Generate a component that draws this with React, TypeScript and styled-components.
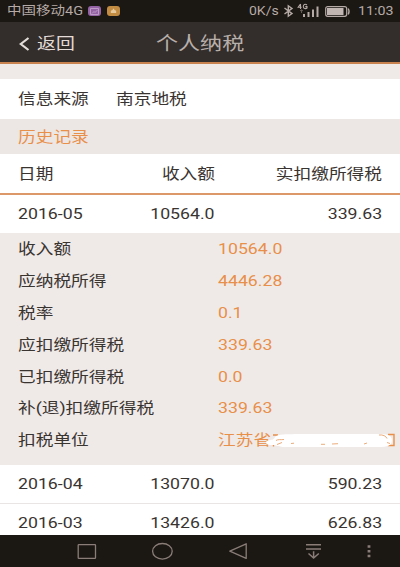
import React from 'react';
import styled, { createGlobalStyle } from 'styled-components';

const GlobalStyle = createGlobalStyle`
  * { box-sizing: border-box; }
  body { margin: 0; background: #1b1713; }
`;

const Screen = styled.main`
  width: 400px;
  height: 567px;
  display: flex;
  flex-direction: column;
  overflow: hidden;
  background: #fff;
  color: #3a3431;
  font-family: Roboto, "Noto Sans CJK SC", sans-serif;
  font-size: 15px;
  line-height: 20px;
`;

/* The typeface is set wide, so glyphs are expanded along the x axis. */
const Wide = styled.span<{ $from?: 'left' | 'right'; $scale?: number }>`
  display: inline-block;
  white-space: nowrap;
  transform: scaleX(${p => p.$scale ?? 1.18});
  transform-origin: ${p => p.$from ?? 'left'} center;
`;

const StatusBar = styled.header`
  flex: none;
  height: 22px;
  padding: 0 7px;
  display: flex;
  align-items: center;
  justify-content: space-between;
  background: #1b1713;
  color: #b5aaa5;
  font-size: 12.5px;
`;

const Carrier = styled.div`
  width: 81px;
`;

const StatusGroup = styled.div`
  display: flex;
  align-items: center;
`;

const AppIcon = styled.span<{ $color: string }>`
  width: 13px;
  height: 10px;
  margin-right: 6px;
  border-radius: 3px;
  background: ${p => p.$color};
  display: flex;
  align-items: center;
  justify-content: center;
`;

const Speed = styled.div`
  width: 34px;
`;

const Clock = styled.div`
  width: 35px;
`;

const TitleBar = styled.nav`
  flex: none;
  height: 42px;
  padding: 3px 0 0 19px;
  display: flex;
  align-items: center;
  background: #332e2b;
  border-bottom: 2px solid #c88250;
`;

const Back = styled.div`
  width: 137px;
  display: flex;
  align-items: center;
  gap: 7px;
  color: #e3dcd8;
  font-size: 16px;
`;

const Title = styled.h1`
  margin: 0;
  color: #b9afaa;
  font-size: 18.7px;
  font-weight: 400;
`;

const Content = styled.div`
  flex: 1;
  min-height: 0;
  overflow: hidden;
`;

const Spacer = styled.div`
  height: 15px;
  background: #efeae8;
`;

const Source = styled.section`
  height: 40px;
  padding: 0 18px;
  display: flex;
  align-items: center;
`;

const SourceLabel = styled.div`
  width: 98px;
`;

const SectionTitle = styled.h2`
  height: 35px;
  margin: 0;
  padding: 0 18px;
  display: flex;
  align-items: center;
  background: #ece6e4;
  color: #e88f49;
  font-size: 15px;
  font-weight: 400;
`;

const Row = styled.div<{ $kind?: 'head' | 'lined' }>`
  height: ${p => (p.$kind === 'head' ? 41 : p.$kind === 'lined' ? 39 : 38)}px;
  padding: 0 18px;
  display: grid;
  grid-template-columns: 108px 89px 1fr;
  align-items: center;
  border-bottom: ${p =>
    p.$kind === 'head' ? '2px solid #dc9868' : p.$kind === 'lined' ? '1px solid #e9e5e4' : 'none'};
`;

const Amount = styled.div`
  text-align: right;
`;

const Details = styled.section`
  height: 232px;
  background: #efeae8;
`;

const Detail = styled.div`
  height: 31.9px;
  padding-left: 18px;
  display: grid;
  grid-template-columns: 200px 1fr;
  align-items: center;
`;

const Value = styled.div`
  display: flex;
  align-items: center;
  color: #e88f49;
`;

const Company = styled.div`
  width: 47px;
`;

const Cover = styled.svg`
  flex: none;
  z-index: 1;
`;

const NavBar = styled.footer`
  flex: none;
  height: 32px;
  background: #1b1713;
`;

const records = [
  ['2016-04', '13070.0', '590.23'],
  ['2016-03', '13426.0', '626.83'],
];

const details = [
  ['收入额', '10564.0'],
  ['应纳税所得', '4446.28'],
  ['税率', '0.1'],
  ['应扣缴所得税', '339.63'],
  ['已扣缴所得税', '0.0'],
  ['补(退)扣缴所得税', '339.63'],
];

function Record({ cells, kind }: { cells: string[]; kind?: 'head' | 'lined' }) {
  return (
    <Row $kind={kind}>
      <div><Wide>{cells[0]}</Wide></div>
      <Amount><Wide $from="right">{cells[1]}</Wide></Amount>
      <Amount><Wide $from="right">{cells[2]}</Wide></Amount>
    </Row>
  );
}

function StatusIcons() {
  return (
    <svg width="75" height="20" viewBox="0 0 75 20" fill="none">
      <path d="M1.5 7 L9 12.6 L5.3 15.2 V4.8 L9 7.4 L1.5 13" stroke="#b5aaa5" strokeWidth="1.4" />
      <path d="M17.5 3 L15.2 6.2 H18.7 M17.5 3 V8 M24 4 C22 2.4 20.3 3.5 20.3 5.5 C20.3 8 23 8 24 7 V5.6 H22.3" stroke="#b5aaa5" strokeWidth="1.1" />
      <path d="M17 10 L18.5 8.8 L20 10 M18.5 9 V12" stroke="#6f6560" strokeWidth="0.9" />
      <path d="M21 13V16 M25.5 11V16 M30 8.5V16 M34.5 5.5V16" stroke="#b5aaa5" strokeWidth="2" />
      <rect x="42.7" y="5.7" width="21" height="9.6" rx="2" stroke="#b5aaa5" strokeWidth="1.2" />
      <rect x="44" y="7" width="16.5" height="7" fill="#c1b6b1" />
      <path d="M65.2 7.5 Q67 10.5 65.2 13.5" stroke="#b5aaa5" strokeWidth="1.3" />
    </svg>
  );
}

function NavIcons() {
  return (
    <svg width="400" height="32" viewBox="0 0 400 32" fill="none" stroke="#8a7d78" strokeWidth="1.3">
      <rect x="78.2" y="9.7" width="17.3" height="13.6" rx="0.6" />
      <ellipse cx="162.4" cy="16.3" rx="9.8" ry="7.8" />
      <path d="M246.2 8.8 V23.4 L229.8 16.2 Z" strokeLinejoin="round" />
      <path d="M306 9.7 H321 M306 14 H321 M313.6 16.3 V23 M308.5 18.5 L313.6 23 L318.8 18.5" strokeWidth="1.5" />
      <path d="M369 10.2 V12.7 M369 15 V17.5 M369 19.8 V22.3" strokeWidth="2.8" />
    </svg>
  );
}

function CoveredName() {
  return (
    <Cover width="131" height="20" viewBox="0 0 131 20" fill="none">
      <path d="M8 5 H13 M8.5 9 V16.5 M123 4.5 H129 V15.5 H123 M122 8 V13" stroke="#e88f49" strokeWidth="1.4" />
      <path d="M1 12 C3 9 9 11 10 7 C13 3.5 22 4.5 30 4 H112 C121 3.5 127 5 127 10 C127 16 122 17 114 17 H20 C14 17 12 15 7 15 C2 15 1 14 1 12 Z" fill="#fff" />
      <path d="M11 10.5 C13 9 16 10 19 9.5 M12 14.5 L17 12.5 M26 13.5 L29 13.2 M56 14.3 H60 M67 14 L73 13.7 M99 14 L102 13 M114 5 C118 4.5 121 6 122 8.5 M122 12.5 L125 13.5" stroke="#e9a16b" strokeWidth="0.9" />
    </Cover>
  );
}

export default function App() {
  return (
    <>
      <GlobalStyle />
      <Screen>
        <StatusBar>
          <StatusGroup>
            <Carrier><Wide $scale={1.16}>中国移动4G</Wide></Carrier>
            <AppIcon $color="#9363a3">
              <svg width="9" height="7" viewBox="0 0 9 7" fill="none" stroke="#c8a9cf" strokeWidth="0.8">
                <path d="M.5 .5 H8.5 V6.5 H.5 Z M2 5.5 L4 3.5 L5 4.5 L7.5 2" />
              </svg>
            </AppIcon>
            <AppIcon $color="#c38c43">
              <svg width="7" height="6" viewBox="0 0 7 6" fill="#e6c99d">
                <path d="M1 5 Q0 2.5 2.5 2 Q3.5 -1 4.5 2 Q7 2.5 6 5 Z" />
              </svg>
            </AppIcon>
          </StatusGroup>
          <StatusGroup>
            <Speed><Wide $scale={1.12}>0K/s</Wide></Speed>
            <StatusIcons />
            <Clock><Wide $scale={1.14}>11:03</Wide></Clock>
          </StatusGroup>
        </StatusBar>
        <TitleBar>
          <Back>
            <svg width="11" height="14" viewBox="0 0 11 14" fill="none" stroke="#e3dcd8" strokeWidth="2.2">
              <path d="M9.5 1 L1.8 7 L9.5 13" />
            </svg>
            <Wide>返回</Wide>
          </Back>
          <Title><Wide>个人纳税</Wide></Title>
        </TitleBar>
        <Content>
          <Spacer />
          <Source>
            <SourceLabel><Wide>信息来源</Wide></SourceLabel>
            <Wide>南京地税</Wide>
          </Source>
          <SectionTitle><Wide>历史记录</Wide></SectionTitle>
          <Record cells={['日期', '收入额', '实扣缴所得税']} kind="head" />
          <Record cells={['2016-05', '10564.0', '339.63']} />
          <Details>
            {details.map(([label, value]) => (
              <Detail key={label}>
                <div><Wide>{label}</Wide></div>
                <Value><Wide>{value}</Wide></Value>
              </Detail>
            ))}
            <Detail>
              <div><Wide>扣税单位</Wide></div>
              <Value>
                <Company><Wide>江苏省</Wide></Company>
                <CoveredName />
              </Value>
            </Detail>
          </Details>
          {records.map((cells, i) => (
            <Record key={cells[0]} cells={cells} kind={i === 0 ? 'lined' : undefined} />
          ))}
        </Content>
        <NavBar><NavIcons /></NavBar>
      </Screen>
    </>
  );
}
